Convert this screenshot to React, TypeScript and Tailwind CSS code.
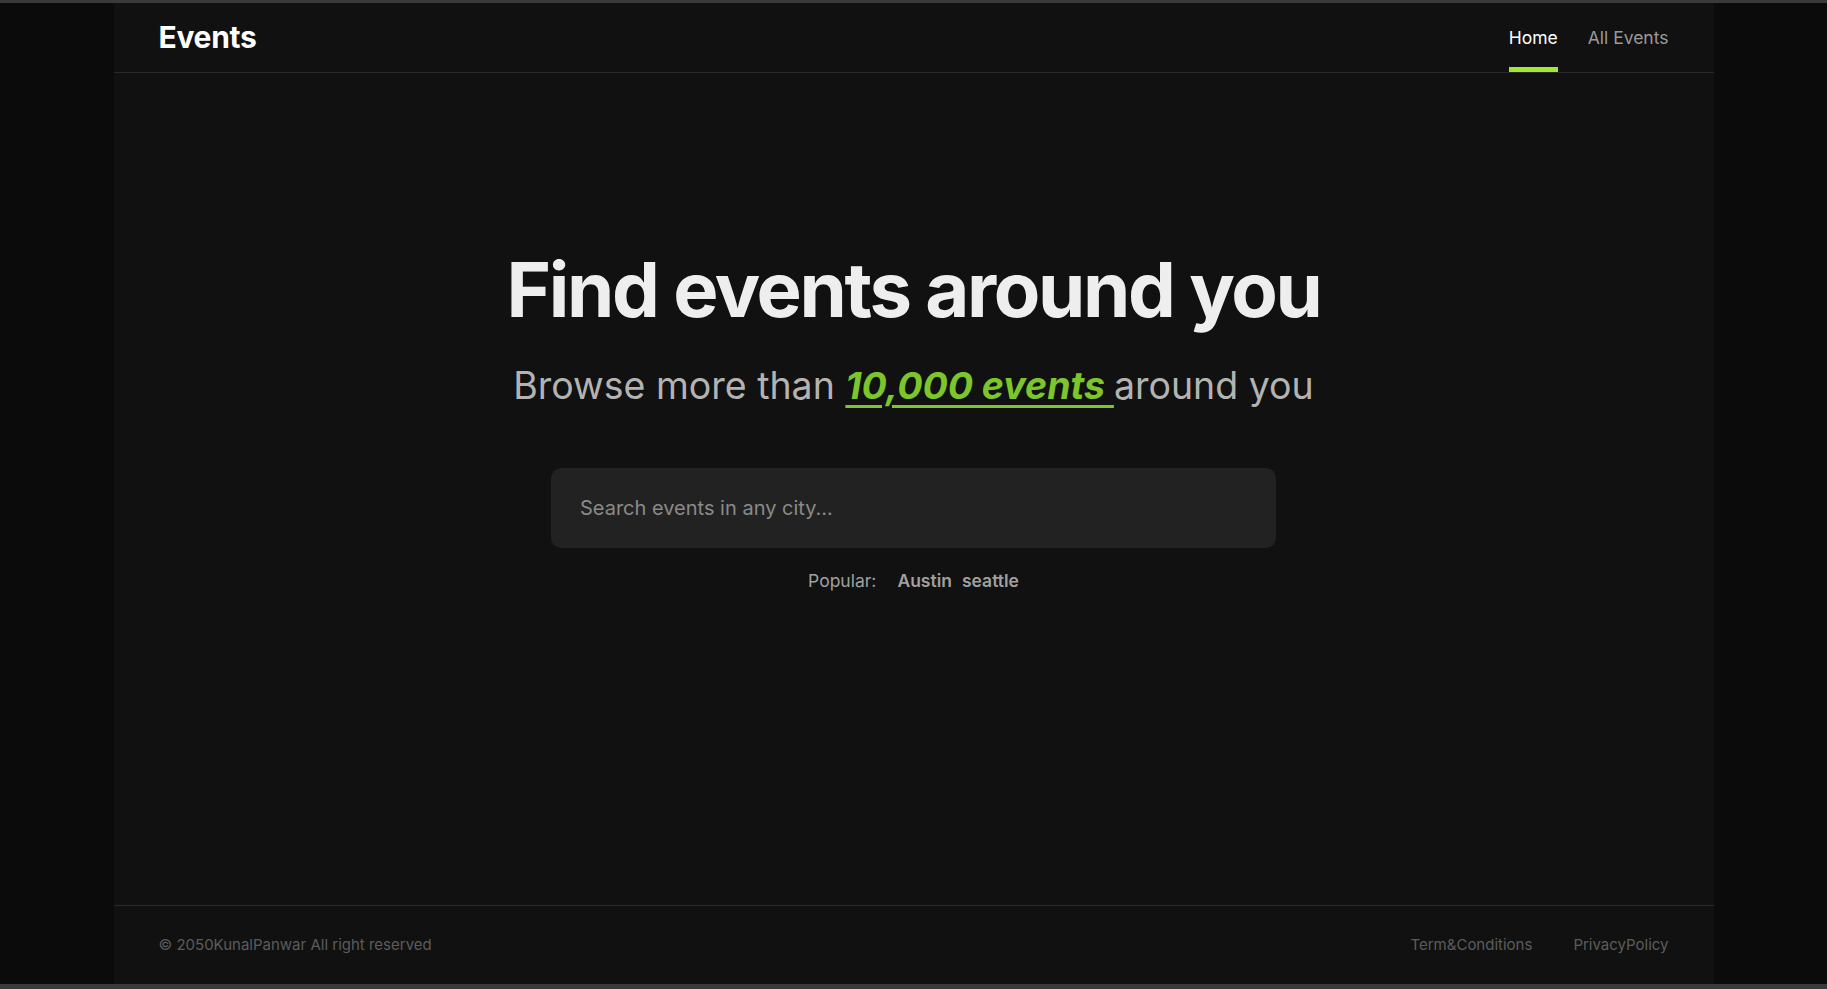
import React from "react";

export default function App() {
  return (
    <div className="h-[989px] w-full bg-[#0b0b0b] flex flex-col border-t-[3px] border-b-[5px] border-t-[#3a3a3a] border-b-[#3a3a3a] overflow-hidden" style={{ fontFamily: "Inter, 'Noto Sans', sans-serif" }}>
      <div className="mx-auto w-[1600px] flex-1 flex flex-col bg-[#111111]">
        <header className="h-[70px] flex items-stretch justify-between px-[45px] border-b border-[#2a2a2a]">
          <div className="flex items-center">
            <span className="text-[30px] font-bold text-white tracking-[-0.01em]">Events</span>
          </div>
          <nav className="flex items-stretch gap-[30px]">
            <a className="relative flex items-center pt-[1px] text-[17.5px] text-white">
              Home
              <span className="absolute left-0 right-0 bottom-0 h-[5px] bg-[#a3e635]" />
            </a>
            <a className="flex items-center pt-[1px] text-[17.5px] text-[#9a9a9a]">All Events</a>
          </nav>
        </header>
        <main className="flex-1 flex flex-col items-center pt-[178px]">
          <h1 className="text-[76px] leading-none font-bold text-[#eeeeee] tracking-[-0.031em]">Find events around you</h1>
          <p className="mt-[39px] text-[37.5px] leading-[40px] text-[#b3b3b3]">
            Browse more than{" "}
            <span className="font-bold italic text-[#7cc52a] underline decoration-[3px] underline-offset-[6px]">10,000 events </span>
            around you
          </p>
          <div className="mt-[62px] w-[725px] h-[80px] rounded-[10px] bg-[#222222] flex items-center px-[29px]">
            <input
              className="w-full bg-transparent outline-none text-[20px] text-[#e5e5e5] placeholder:text-[#8a8a8a]"
              placeholder="Search events in any city..."
            />
          </div>
          <div className="mt-[20px] flex items-center text-[17.5px] text-[#a0a0a0]">
            <span>Popular:</span>
            <span className="ml-[21px] font-semibold">Austin</span>
            <span className="ml-[10px] font-semibold">seattle</span>
          </div>
        </main>
        <footer className="h-[79px] border-t border-[#2a2a2a] flex items-center justify-between px-[45px] text-[15px] text-[#5c5c5c]">
          <span>© 2050KunalPanwar All right reserved</span>
          <div className="flex gap-[41px]">
            <span>Term&Conditions</span>
            <span>PrivacyPolicy</span>
          </div>
        </footer>
      </div>
    </div>
  );
}
